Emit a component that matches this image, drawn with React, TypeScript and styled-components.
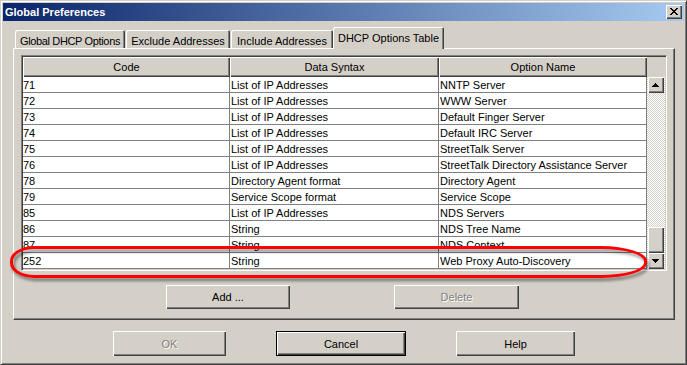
import React from 'react';
import styled, { createGlobalStyle, css } from 'styled-components';

const GlobalStyle = createGlobalStyle`
  html, body { margin: 0; padding: 0; background: #d4d0c8; }
  body { font-family: "Liberation Sans", Arial, sans-serif; font-size: 11px; color: #000; }
  * { box-sizing: border-box; }
`;

const raised = css`
  background: #d4d0c8;
  box-shadow: inset 1px 1px #fff, inset -1px -1px #404040, inset -2px -2px #808080;
`;

const Window = styled.div`
  position: relative;
  width: 687px;
  height: 365px;
  background: #d4d0c8;
  border: 1px solid;
  border-color: #d4d0c8 #404040 #404040 #d4d0c8;
  box-shadow: inset 1px 1px #fff, inset -1px -1px #808080;
  padding: 2px;
  display: flex;
  flex-direction: column;
  overflow: hidden;
`;

const TitleBar = styled.div`
  height: 18px;
  display: flex;
  align-items: center;
  justify-content: space-between;
  padding: 0 2px;
  background: linear-gradient(to right, #0a246a, #a6caf0);
  color: #fff;
  font-weight: bold;
  font-size: 11px;
`;

const CloseButton = styled.div`
  ${raised};
  width: 16px;
  height: 14px;
  display: flex;
  padding: 3px 0 0 4px;
`;

const Body = styled.div`
  padding: 6px 9px 0 10px;
  display: flex;
  flex-direction: column;
`;

const TabStrip = styled.div`
  position: relative;
  z-index: 1;
  display: flex;
  align-items: flex-end;
  gap: 1px;
  height: 21px;
  padding-left: 2px;
`;

const Tab = styled.div<{ $w: number; $active?: boolean; $tight?: boolean }>`
  width: ${(p) => p.$w}px;
  height: ${(p) => (p.$active ? 22 : 18)}px;
  margin-left: ${(p) => (p.$active ? -1 : 0)}px;
  margin-bottom: ${(p) => (p.$active ? -1 : 0)}px;
  background: #d4d0c8;
  border-radius: 2px 2px 0 0;
  box-shadow: inset 1px 1px #fff, inset -1px 0 #404040, inset -2px 0 #808080;
  text-align: center;
  line-height: 13px;
  padding-top: 5px;
  letter-spacing: ${(p) => (p.$tight ? '-0.35px' : 'normal')};
  white-space: nowrap;
`;

const Panel = styled.div`
  border: 1px solid;
  border-color: #fff #404040 #404040 #fff;
  box-shadow: inset -1px -1px #808080;
  padding: 6px 7px 10px 7px;
  display: flex;
  flex-direction: column;
`;

const TableFrame = styled.div`
  border: 1px solid;
  border-color: #808080 #fff #fff #808080;
  box-shadow: inset 1px 1px #404040, inset -1px -1px #d4d0c8;
  padding: 1px;
  background: #d4d0c8;
`;

const Columns = '207px 209px 208px';

const HeaderRow = styled.div`
  display: grid;
  grid-template-columns: ${Columns} 18px;
  height: 20px;
`;

const HeaderCell = styled.div`
  ${raised};
  text-align: center;
  line-height: 20px;
`;

const Corner = styled.div`
  background: #d4d0c8;
`;

const BodyArea = styled.div`
  display: flex;
`;

const RowsGrid = styled.div`
  display: grid;
  grid-template-columns: ${Columns};
  grid-auto-rows: 16px;
  background: #fff;
`;

const Cell = styled.div`
  border-right: 1px solid #808080;
  border-bottom: 1px solid #808080;
  line-height: 15px;
  padding-top: 1px;
  padding-left: 1px;
  white-space: nowrap;
  overflow: hidden;
  &:nth-child(3n + 1) {
    padding-left: 0;
  }
`;

const ScrollBar = styled.div`
  width: 18px;
  height: 192px;
  display: flex;
  flex-direction: column;
  padding: 0 1px;
  background: repeating-conic-gradient(#fff 0 25%, #d4d0c8 0 50%) 0 0 / 2px 2px;
`;

const ScrollButton = styled.div`
  ${raised};
  width: 16px;
  height: 16px;
  flex: none;
  display: flex;
  padding: 6px 0 0 4px;
`;

const Track = styled.div`
  flex: 1;
`;

const Thumb = styled.div`
  ${raised};
  width: 16px;
  height: 26px;
  flex: none;
`;

const ButtonRow = styled.div<{ $pad: number; $gap: number; $top: number }>`
  display: flex;
  padding-left: ${(p) => p.$pad}px;
  gap: ${(p) => p.$gap}px;
  margin-top: ${(p) => p.$top}px;
`;

const PushButton = styled.button<{ $w: number; $h: number; $default?: boolean }>`
  width: ${(p) => p.$w}px;
  height: ${(p) => p.$h}px;
  border: none;
  padding: 0;
  margin: 0;
  font-family: "Liberation Sans", Arial, sans-serif;
  font-size: 11px;
  color: #000;
  background: #d4d0c8;
  box-shadow: ${(p) =>
    p.$default
      ? 'inset 0 0 0 1px #000, inset 2px 2px #fff, inset -2px -2px #404040, inset -3px -3px #808080'
      : 'inset 1px 1px #fff, inset -1px -1px #404040, inset -2px -2px #808080'};
  &:disabled {
    color: #808080;
    text-shadow: 1px 1px 0 #fff;
  }
`;

const Annotation = styled.div`
  position: absolute;
  left: 9px;
  top: 245px;
  width: 637px;
  height: 32px;
  border: 3px solid #f00;
  border-radius: 24px 46px 46px 24px / 15px 15px 15px 15px;
  filter: drop-shadow(2px 3px 1.5px rgba(0, 0, 0, 0.45));
  pointer-events: none;
`;

const rows: [string, string, string][] = [
  ['71', 'List of IP Addresses', 'NNTP Server'],
  ['72', 'List of IP Addresses', 'WWW Server'],
  ['73', 'List of IP Addresses', 'Default Finger Server'],
  ['74', 'List of IP Addresses', 'Default IRC Server'],
  ['75', 'List of IP Addresses', 'StreetTalk Server'],
  ['76', 'List of IP Addresses', 'StreetTalk Directory Assistance Server'],
  ['78', 'Directory Agent format', 'Directory Agent'],
  ['79', 'Service Scope format', 'Service Scope'],
  ['85', 'List of IP Addresses', 'NDS Servers'],
  ['86', 'String', 'NDS Tree Name'],
  ['87', 'String', 'NDS Context'],
  ['252', 'String', 'Web Proxy Auto-Discovery'],
];

const CloseGlyph = () => (
  <svg width="8" height="7" viewBox="0 0 8 7" shapeRendering="crispEdges">
    <path
      fill="#000"
      d="M0 0h2v1H0z M6 0h2v1H6z M1 1h2v1H1z M5 1h2v1H5z M2 2h4v1H2z M3 3h2v1H3z M2 4h4v1H2z M1 5h2v1H1z M5 5h2v1H5z M0 6h2v1H0z M6 6h2v1H6z"
    />
  </svg>
);

const Arrow = ({ down }: { down?: boolean }) => (
  <svg width="7" height="4" viewBox="0 0 7 4" shapeRendering="crispEdges">
    <path
      fill="#000"
      d={
        down
          ? 'M0 0h7v1H0z M1 1h5v1H1z M2 2h3v1H2z M3 3h1v1H3z'
          : 'M3 0h1v1H3z M2 1h3v1H2z M1 2h5v1H1z M0 3h7v1H0z'
      }
    />
  </svg>
);

export default function App() {
  return (
    <>
      <GlobalStyle />
      <Window>
        <TitleBar>
          <span>Global Preferences</span>
          <CloseButton>
            <CloseGlyph />
          </CloseButton>
        </TitleBar>
        <Body>
          <TabStrip>
            <Tab $w={110} $tight>
              Global DHCP Options
            </Tab>
            <Tab $w={104}>Exclude Addresses</Tab>
            <Tab $w={102}>Include Addresses</Tab>
            <Tab $w={111} $active>
              DHCP Options Table
            </Tab>
          </TabStrip>
          <Panel>
            <TableFrame>
              <HeaderRow>
                <HeaderCell>Code</HeaderCell>
                <HeaderCell>Data Syntax</HeaderCell>
                <HeaderCell>Option Name</HeaderCell>
                <Corner />
              </HeaderRow>
              <BodyArea>
                <RowsGrid>
                  {rows.map((r) => (
                    <React.Fragment key={r[0]}>
                      <Cell>{r[0]}</Cell>
                      <Cell>{r[1]}</Cell>
                      <Cell>{r[2]}</Cell>
                    </React.Fragment>
                  ))}
                </RowsGrid>
                <ScrollBar>
                  <ScrollButton>
                    <Arrow />
                  </ScrollButton>
                  <Track />
                  <Thumb />
                  <ScrollButton>
                    <Arrow down />
                  </ScrollButton>
                </ScrollBar>
              </BodyArea>
            </TableFrame>
            <ButtonRow $pad={145} $gap={104} $top={14}>
              <PushButton $w={124} $h={24}>Add ...</PushButton>
              <PushButton $w={125} $h={24} disabled>
                Delete
              </PushButton>
            </ButtonRow>
          </Panel>
          <ButtonRow $pad={100} $gap={50} $top={11}>
            <PushButton $w={113} $h={25} disabled>
              OK
            </PushButton>
            <PushButton $w={130} $h={25} $default>
              Cancel
            </PushButton>
            <PushButton $w={119} $h={25}>Help</PushButton>
          </ButtonRow>
        </Body>
        <Annotation />
      </Window>
    </>
  );
}
